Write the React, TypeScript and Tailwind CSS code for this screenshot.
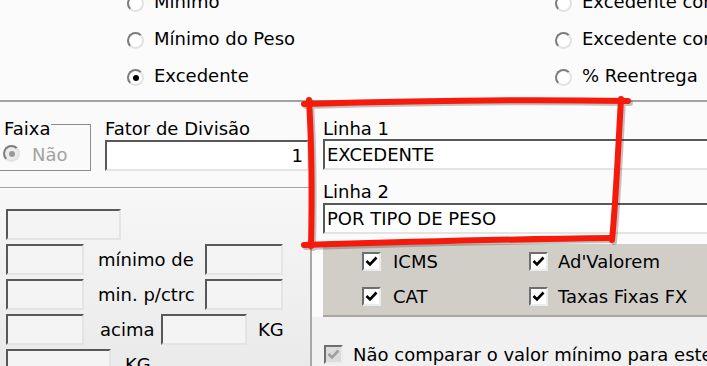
import React from "react";

function Radio({ checked = false, disabled = false }: { checked?: boolean; disabled?: boolean }) {
  return (
    <span
      className={
        "flex h-[17px] w-[17px] shrink-0 items-center justify-center rounded-full border-2 border-t-[#7c7c7c] border-l-[#7c7c7c] border-r-[#e2e2e2] border-b-[#e2e2e2] " +
        (disabled ? "bg-[#ececec]" : "bg-white")
      }
    >
      {checked && (
        <span className={"h-[6px] w-[6px] rounded-full " + (disabled ? "bg-[#9a9a9a]" : "bg-black")} />
      )}
    </span>
  );
}

function Check({ disabled = false }: { disabled?: boolean }) {
  return (
    <span
      className={
        "flex h-[19px] w-[19px] shrink-0 items-center justify-center border-2 border-t-[#6e6e6e] border-l-[#6e6e6e] border-r-[#ececec] border-b-[#ececec] " +
        (disabled ? "bg-[#dcdcdc]" : "bg-white")
      }
    >
      <svg width="13" height="11" viewBox="0 0 13 11">
        <polyline
          points="1.5,5 5,8.5 11.5,1.5"
          fill="none"
          stroke={disabled ? "#a0a0a0" : "#000"}
          strokeWidth="2.6"
        />
      </svg>
    </span>
  );
}

function Field({
  className = "",
  white = false,
  children,
}: {
  className?: string;
  white?: boolean;
  children?: React.ReactNode;
}) {
  return (
    <div
      className={
        "flex h-[31px] shrink-0 items-center border-2 border-t-[#585858] border-l-[#585858] border-r-[#e4e4e4] border-b-[#e4e4e4] px-[2px] whitespace-nowrap " +
        (white ? "bg-white " : "bg-[#f4f4f4] ") +
        className
      }
    >
      {children}
    </div>
  );
}

function RadioRow({ label, checked }: { label: string; checked?: boolean }) {
  return (
    <div className="flex h-[21px] shrink-0 items-start gap-[10px] whitespace-nowrap">
      <span className="mt-[4px]">
        <Radio checked={checked} />
      </span>
      <span>{label}</span>
    </div>
  );
}

export default function App() {
  return (
    <div className="relative h-[366px] w-[707px] overflow-hidden bg-[#f8f8f8] font-['DejaVu_Sans',_'Verdana',_sans-serif] text-[18px] leading-[21px] text-black">
      {/* top options */}
      <div className="flex h-[100px] bg-[#fbfbfb] pl-[127px]">
        <div className="-mt-[9px] flex w-[428px] shrink-0 flex-col gap-[16px]">
          <RadioRow label="Mínimo" />
          <RadioRow label="Mínimo do Peso" />
          <RadioRow label="Excedente" checked />
        </div>
        <div className="-mt-[9px] flex shrink-0 flex-col gap-[16px]">
          <RadioRow label="Excedente com Mínimo" />
          <RadioRow label="Excedente com Fração" />
          <RadioRow label="% Reentrega" />
        </div>
      </div>
      <div className="h-[2px] bg-[#a2a2a2]" />

      <div className="flex h-[264px]">
        {/* left panel */}
        <div className="flex w-[310px] shrink-0 flex-col">
          <div className="flex h-[85px] shrink-0 bg-[#fafafa]">
            <div className="relative -ml-[2px] mt-[22px] h-[47px] w-[93px] shrink-0 border border-[#8e8e8e]">
              <span className="absolute -top-[7px] left-0 bg-[#fafafa] pl-[5px] pr-[1px]">Faixa</span>
              <div className="flex items-start gap-[12px] pl-[4px] pt-[19px]">
                <span className="mt-[1px]">
                  <Radio checked disabled />
                </span>
                <span className="text-[#a3a3a3]">Não</span>
              </div>
            </div>
            <div className="ml-[14px] flex flex-col pt-[16px]">
              <span className="whitespace-nowrap">Fator de Divisão</span>
              <Field white className="mt-[1px] w-[204px] justify-end pr-[4px]">
                1
              </Field>
            </div>
          </div>
          <div className="h-[1px] shrink-0 bg-[#a4a4a4]" />
          <div className="h-[1px] shrink-0 bg-white" />
          <div className="flex flex-1 flex-col gap-[4px] overflow-hidden bg-gradient-to-b from-[#f7f7f7] to-[#eaeaea] pl-[6px] pt-[20px]">
            <Field className="w-[115px]" />
            <div className="flex shrink-0 items-center">
              <Field className="w-[78px]" />
              <span className="w-[121px] whitespace-nowrap pl-[14px]">mínimo de</span>
              <Field className="w-[78px]" />
            </div>
            <div className="flex shrink-0 items-center">
              <Field className="w-[78px]" />
              <span className="w-[121px] whitespace-nowrap pl-[14px]">min. p/ctrc</span>
              <Field className="w-[78px]" />
            </div>
            <div className="flex shrink-0 items-center">
              <Field className="w-[78px]" />
              <span className="w-[77px] whitespace-nowrap pl-[16px]">acima</span>
              <Field className="w-[86px]" />
              <span className="pl-[11px]">KG</span>
            </div>
            <div className="flex shrink-0 items-center">
              <Field className="w-[105px]" />
              <span className="pl-[14px]">KG</span>
            </div>
          </div>
        </div>

        <div className="w-[2px] shrink-0 bg-[#a8a8a8]" />

        {/* right panel */}
        <div className="flex flex-1 flex-col overflow-hidden bg-[#fbfbfb] pl-[11px] pt-[16px]">
          <span>Linha 1</span>
          <Field white className="w-[440px]">
            EXCEDENTE
          </Field>
          <span className="mt-[11px]">Linha 2</span>
          <Field white className="mt-[1px] w-[440px]">
            POR TIPO DE PESO
          </Field>
          <div className="mt-[10px] flex h-[73px] w-[440px] shrink-0 flex-col gap-[16px] border-b-2 border-[#a9a6a0] bg-[#d1cec8] pl-[39px] pt-[8px]">
            <div className="flex h-[19px] items-center">
              <div className="flex w-[167px] items-center gap-[12px]">
                <Check />
                <span>ICMS</span>
              </div>
              <div className="flex items-center gap-[10px] whitespace-nowrap">
                <Check />
                <span>Ad'Valorem</span>
              </div>
            </div>
            <div className="flex h-[19px] items-center">
              <div className="flex w-[167px] items-center gap-[12px]">
                <Check />
                <span>CAT</span>
              </div>
              <div className="flex items-center gap-[10px] whitespace-nowrap">
                <Check />
                <span>Taxas Fixas FX</span>
              </div>
            </div>
          </div>
          <div className="-mx-[11px] flex flex-1 bg-[#f1f1f1] pl-[12px] pt-[28px]">
            <div className="flex h-[19px] items-center gap-[10px] whitespace-nowrap">
              <Check disabled />
              <span>Não comparar o valor mínimo para este cliente</span>
            </div>
          </div>
        </div>
      </div>

      {/* red hand-drawn annotation */}
      <svg className="pointer-events-none absolute left-0 top-0" width="707" height="366" viewBox="0 0 707 366">
        <g fill="none" strokeLinecap="round" strokeLinejoin="round" strokeWidth="6">
          <g stroke="#3a2a2a" opacity="0.28" transform="translate(2,2)">
            <path d="M304 104 C 400 101, 520 99, 628 101" />
            <path d="M621 99 C 618 150, 616 200, 612 240" />
            <path d="M304 245 C 400 242, 520 239, 612 238" />
            <path d="M309 100 C 312 150, 312 200, 311 246" />
          </g>
          <g stroke="#f51a0a">
            <path d="M304 104 C 400 101, 520 99, 628 101" />
            <path d="M621 99 C 618 150, 616 200, 612 240" />
            <path d="M304 245 C 400 242, 520 239, 612 238" />
            <path d="M309 100 C 312 150, 312 200, 311 246" />
          </g>
        </g>
      </svg>
    </div>
  );
}
